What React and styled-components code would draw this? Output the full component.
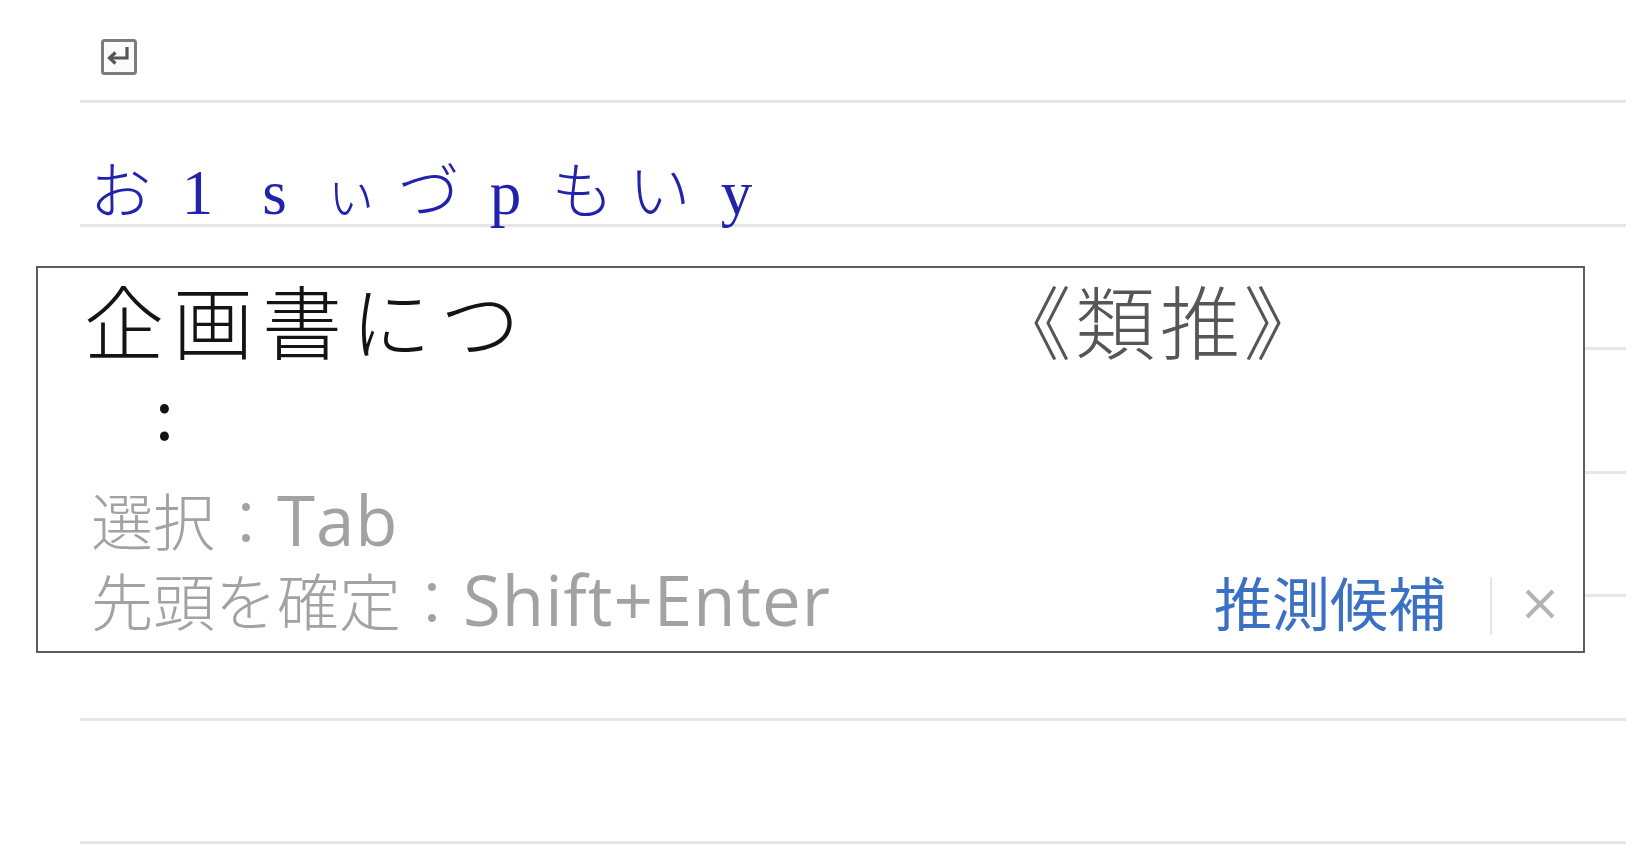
import React from "react";
import styled, { createGlobalStyle } from "styled-components";

const Global = createGlobalStyle`
  html, body { margin: 0; padding: 0; background: #ffffff; }
  body { overflow: hidden; }
`;

const Page = styled.div`
  position: relative;
  width: 1626px;
  height: 856px;
  overflow: hidden;
  background: #ffffff;
  font-family: "Noto Sans CJK JP", sans-serif;
`;

const Doc = styled.div`
  padding-left: 80px;
  display: flex;
  flex-direction: column;
`;

const Line = styled.div`
  height: ${(p) => p.$h}px;
  border-bottom: 3px solid #e6e6e6;
  display: flex;
  align-items: ${(p) => (p.$top ? "flex-start" : "flex-end")};
`;

const ReturnMark = styled.svg`
  margin-left: 21px;
  margin-top: 39px;
  width: 36px;
  height: 36px;
  display: block;
`;

const Composition = styled.div`
  margin-left: 2px;
  padding-bottom: 1px;
  display: flex;
  align-items: baseline;
  color: #2222ad;
  line-height: 60px;
`;

const Cell = styled.span`
  width: 77px;
  text-align: center;
  font-family: ${(p) =>
    p.$latin ? '"Liberation Serif", serif' : '"Noto Sans CJK JP", sans-serif'};
  font-size: ${(p) => (p.$small ? 54 : p.$latin ? 63 : 62)}px;
  font-weight: ${(p) => (p.$latin ? 400 : 300)};
`;

const Popup = styled.div`
  position: absolute;
  left: 36px;
  top: 266px;
  width: 1549px;
  height: 387px;
  box-sizing: border-box;
  border: 2px solid #5c5c5c;
  background: #ffffff;
  padding: 8px 27px 10px 46px;
  display: flex;
  flex-direction: column;
`;

const CandidateRow = styled.div`
  display: grid;
  grid-template-columns: 946px auto;
  height: 84px;
  align-items: start;
`;

const Reading = styled.span`
  font-size: 80px;
  line-height: 84px;
  letter-spacing: 9px;
  color: #141414;
  font-weight: 300;
  white-space: nowrap;
`;

const Tag = styled.span`
  font-size: 80px;
  line-height: 84px;
  letter-spacing: 5px;
  color: #565656;
  font-weight: 300;
  font-feature-settings: "palt";
  white-space: nowrap;
`;

const ColonRow = styled.div`
  height: 119px;
  box-sizing: border-box;
  padding-bottom: 18px;
  padding-left: 71px;
  font-size: 68px;
  line-height: 101px;
  color: #111111;
`;

const HintRow = styled.div`
  height: 80px;
  display: flex;
  align-items: center;
  justify-content: space-between;
`;

const Hint = styled.span`
  margin-left: 7px;
  font-size: 62px;
  line-height: 80px;
  color: #a2a2a2;
  font-weight: 300;
  white-space: nowrap;
`;

const Key = styled.span`
  font-family: "Open Sans", "Noto Sans CJK JP", sans-serif;
  font-size: 69px;
  letter-spacing: 1px;
  font-weight: 400;
`;

const Actions = styled.div`
  display: flex;
  align-items: center;
  height: 80px;
`;

const Mode = styled.span`
  font-size: 58px;
  line-height: 80px;
  color: #3b71c4;
  font-weight: 400;
  margin-top: 4px;
`;

const Divider = styled.span`
  width: 2px;
  height: 58px;
  margin-left: 44px;
  margin-top: 14px;
  background: #e4e4e4;
`;

const CloseIcon = styled.svg`
  width: 32px;
  height: 32px;
  margin-left: 32px;
  margin-top: 10px;
  display: block;
`;

const compose = [
  { c: "お" },
  { c: "1", latin: true },
  { c: "s", latin: true },
  { c: "ぃ", small: true },
  { c: "づ" },
  { c: "p", latin: true },
  { c: "も" },
  { c: "い" },
  { c: "y", latin: true },
];

export default function App() {
  return (
    <Page>
      <Global />
      <Doc>
        <Line $h={100} $top>
          <ReturnMark viewBox="0 0 36 36">
            <rect x="1.5" y="1.5" width="33" height="33" rx="2" fill="#fbfbfb" stroke="#7c7c7c" strokeWidth="3" />
            <path d="M26 8 V19 H9" fill="none" stroke="#555" strokeWidth="3.2" />
            <path d="M14.5 13.5 L8.5 19 L14.5 24.5" fill="none" stroke="#555" strokeWidth="3.2" />
          </ReturnMark>
        </Line>
        <Line $h={120.5}>
          <Composition>
            {compose.map((k, i) => (
              <Cell key={i} $latin={k.latin} $small={k.small}>
                {k.c}
              </Cell>
            ))}
          </Composition>
        </Line>
        <Line $h={120.5} />
        <Line $h={120.5} />
        <Line $h={120.5} />
        <Line $h={120.5} />
        <Line $h={120.5} />
      </Doc>

      <Popup>
        <CandidateRow>
          <Reading>企画書につ</Reading>
          <Tag>《類推》</Tag>
        </CandidateRow>
        <ColonRow>:</ColonRow>
        <HintRow>
          <Hint>
            選択：<Key>Tab</Key>
          </Hint>
        </HintRow>
        <HintRow>
          <Hint>
            先頭を確定：<Key>Shift+Enter</Key>
          </Hint>
          <Actions>
            <Mode>推測候補</Mode>
            <Divider />
            <CloseIcon viewBox="0 0 32 32">
              <path d="M3 3 L29 29 M29 3 L3 29" stroke="#b3b3b3" strokeWidth="4" />
            </CloseIcon>
          </Actions>
        </HintRow>
      </Popup>
    </Page>
  );
}
